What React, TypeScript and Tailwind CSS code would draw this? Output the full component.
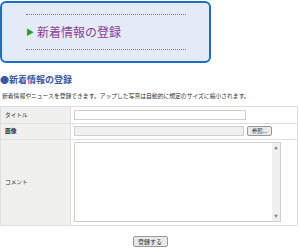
export default function App() {
  return (
    <div className="w-[300px] h-[250px] bg-white overflow-hidden" style={{ fontFamily: '"Noto Sans CJK JP", "Liberation Sans", sans-serif' }}>
      {/* Title banner */}
      <div className="w-[211px] h-[62px] mt-px border-2 border-[#1c70c4] rounded-[6px] bg-[#e5ebf6] px-[24px] pt-[11px]">
        <div className="border-t border-dotted border-[#777] w-[160px]" />
        <div className="flex items-center h-[34px] gap-[3px]">
          <span className="text-[#2f9a2a] text-[8px] leading-none">▶</span>
          <span className="text-[#8b3d98] text-[12px] leading-none">新着情報の登録</span>
        </div>
        <div className="border-t border-dotted border-[#777] w-[160px]" />
      </div>

      {/* Section heading */}
      <div className="mt-[12px] text-[#3a5aa8] text-[9px] font-bold leading-none">●新着情報の登録</div>
      <div className="mt-[9px] pl-[2px] text-[5.8px] text-[#333] leading-none">
        新着情報やニュースを登録できます。アップした写真は自動的に規定のサイズに縮小されます。
      </div>

      {/* Form */}
      <table className="mt-[7px] w-[298px] border-collapse text-[5.7px] text-[#333]">
        <tbody>
          <tr className="h-[17px]">
            <td className="w-[70px] bg-[#f0f0ee] border border-[#dedede] pl-[4px]">タイトル</td>
            <td className="border border-[#dedede] pl-[3px]">
              <div className="w-[172px] h-[10px] border border-[#cfcfcf] bg-white" />
            </td>
          </tr>
          <tr className="h-[16px]">
            <td className="bg-[#f0f0ee] border border-[#dedede] pl-[4px] font-bold">画像</td>
            <td className="border border-[#dedede] pl-[3px]">
              <div className="flex items-center gap-[3px]">
                <div className="w-[170px] h-[10px] border border-[#cfcfcf] bg-[#efefef]" />
                <div className="w-[25px] h-[10px] border border-[#999] rounded-[2px] bg-[#e9e9e9] flex items-center justify-center text-[5.5px]">参照...</div>
              </div>
            </td>
          </tr>
          <tr className="h-[86px]">
            <td className="bg-[#f0f0ee] border border-[#dedede] pl-[4px]">コメント</td>
            <td className="border border-[#dedede] pl-[3px]">
              <div className="w-[207px] h-[80px] border border-[#d0d0d0] bg-white flex justify-end">
                <div className="w-[8px] h-full bg-[#f0f0f0] flex flex-col justify-between items-center py-[3px] text-[4px] text-[#888] leading-none">
                  <span>▲</span>
                  <span>▼</span>
                </div>
              </div>
            </td>
          </tr>
        </tbody>
      </table>

      <div className="mt-[10px] flex justify-center">
        <div className="w-[35px] h-[11px] border border-[#999] rounded-[2px] bg-[#e9e9e9] flex items-center justify-center text-[6px] text-[#333]">登録する</div>
      </div>
    </div>
  )
}
